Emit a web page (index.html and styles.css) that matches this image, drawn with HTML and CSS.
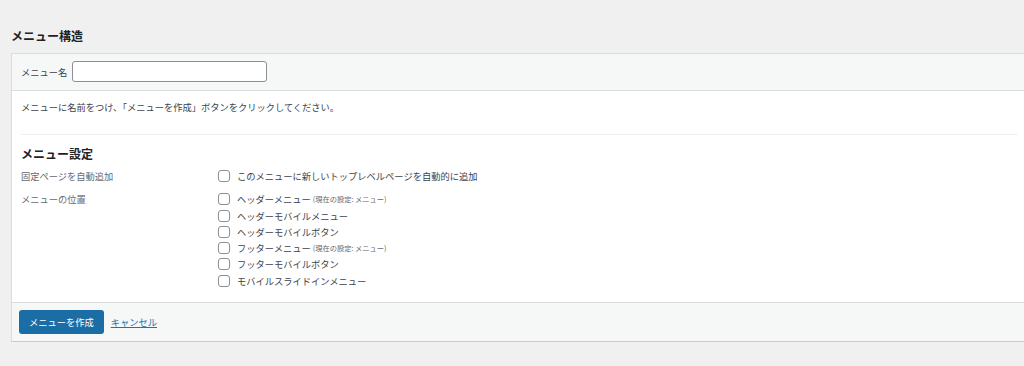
FILE: index.html
```html
<!DOCTYPE html>
<html lang="ja">
<head>
  <meta charset="UTF-8">
  <meta name="viewport" content="width=device-width, initial-scale=1.0">
  <title>メニュー構造</title>
  <link rel="stylesheet" href="styles.css">
</head>
<body>
  <div class="wrap">
    <!-- 見出し -->
    <h2 class="title">メニュー構造</h2>

    <!-- メニュー編集パネル -->
    <div class="panel">
      <div class="panel-header">
        <label for="menu-name" class="name-label">メニュー名</label>
        <input type="text" id="menu-name" class="name-input">
      </div>

      <div class="panel-body">
        <p class="hint">メニューに名前をつけ、「メニューを作成」ボタンをクリックしてください。</p>
        <div class="divider"></div>

        <h3 class="subtitle">メニュー設定</h3>

        <div class="setting-row">
          <div class="setting-label">固定ページを自動追加</div>
          <ul class="check-list">
            <li><label><input type="checkbox" class="check"> このメニューに新しいトップレベルページを自動的に追加</label></li>
          </ul>
        </div>

        <div class="setting-row">
          <div class="setting-label">メニューの位置</div>
          <ul class="check-list">
            <li><label><input type="checkbox" class="check"> ヘッダーメニュー <span class="note">(現在の設定: メニュー)</span></label></li>
            <li><label><input type="checkbox" class="check"> ヘッダーモバイルメニュー</label></li>
            <li><label><input type="checkbox" class="check"> ヘッダーモバイルボタン</label></li>
            <li><label><input type="checkbox" class="check"> フッターメニュー <span class="note">(現在の設定: メニュー)</span></label></li>
            <li><label><input type="checkbox" class="check"> フッターモバイルボタン</label></li>
            <li><label><input type="checkbox" class="check"> モバイルスライドインメニュー</label></li>
          </ul>
        </div>
      </div>

      <div class="panel-footer">
        <button class="btn-primary">メニューを作成</button>
        <a href="#" class="cancel">キャンセル</a>
      </div>
    </div>
  </div>
</body>
</html>
```

FILE: styles.css
```css
/* 全体 */
body {
  margin: 0;
  background-color: #f0f0f1;
  font-family: "Noto Sans CJK JP", "Noto Sans", sans-serif;
  font-size: 9.25px;
  color: #3c434a;
  overflow: hidden;
}

.wrap {
  padding-left: 11px;
}

/* 見出し */
.title {
  margin: 0;
  padding-top: 28px;
  margin-bottom: 9px;
  font-size: 12px;
  line-height: 16px;
  font-weight: 700;
  color: #1d2327;
}

/* パネル */
.panel {
  margin-right: -4px;
  background-color: #fff;
  border: 1px solid #dcdcde;
  border-bottom-color: #c9cacc;
  box-shadow: 0 1px 1px rgba(0, 0, 0, 0.04);
}

.panel-header {
  display: flex;
  align-items: center;
  gap: 5px;
  padding: 7px 9px 8px;
  background-color: #f6f7f7;
  border-bottom: 1px solid #dcdcde;
}

.name-label {
  line-height: 14px;
}

.name-input {
  box-sizing: border-box;
  width: 195px;
  height: 21px;
  margin: 0;
  border: 1px solid #8c8f94;
  border-radius: 3px;
  background: #fff;
}

/* 本文 */
.panel-body {
  padding: 9px 9px 13px;
}

.hint {
  margin: 0;
  line-height: 14px;
}

.divider {
  height: 1px;
  margin-top: 20px;
  background-color: #f0f0f1;
}

.subtitle {
  margin: 11px 0 6px;
  font-size: 12px;
  line-height: 16px;
  font-weight: 700;
  color: #1d2327;
}

.setting-row {
  display: flex;
}

.setting-row + .setting-row {
  margin-top: 7px;
}

.setting-label {
  width: 197px;
  flex-shrink: 0;
  line-height: 16px;
  color: #646970;
}

.check-list {
  margin: 0;
  padding: 0;
  list-style: none;
}

.check-list li {
  height: 16.3px;
  line-height: 16px;
}

.check-list label {
  display: flex;
  align-items: center;
  white-space: pre;
}

.check {
  appearance: none;
  box-sizing: border-box;
  width: 12px;
  height: 12px;
  margin: 0 5px 0 0;
  border: 1px solid #8c8f94;
  border-radius: 3px;
  background: #fff;
}

.note {
  font-size: 7.25px;
  color: #646970;
}

/* フッター */
.panel-footer {
  display: flex;
  align-items: center;
  gap: 7px;
  padding: 7px;
  background-color: #f6f7f7;
  border-top: 1px solid #dcdcde;
}

.btn-primary {
  height: 24px;
  padding: 0 10px;
  border: none;
  border-radius: 3px;
  background-color: #1a6ea5;
  color: #fff;
  font-family: inherit;
  font-size: 9.25px;
}

.cancel {
  color: #2271b1;
  text-decoration: underline;
}
```
